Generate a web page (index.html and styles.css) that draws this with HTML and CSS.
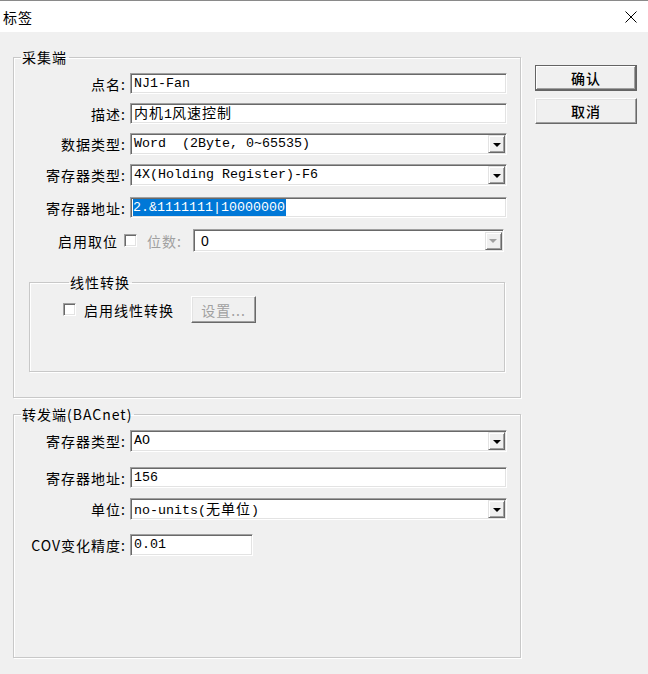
FILE: index.html
```html
<!DOCTYPE html>
<html lang="zh-CN">
<head>
<meta charset="utf-8">
<title>标签</title>
<link rel="stylesheet" href="styles.css">
</head>
<body>
<div class="titlebar">
  <span class="title">标签</span>
  <svg class="close" width="12" height="12" viewBox="0 0 12 12"><path d="M0.5 0.5 L11.5 11.5 M11.5 0.5 L0.5 11.5" stroke="#000" stroke-width="1" fill="none"/></svg>
</div>
<div class="content">
  <div class="groups">
    <fieldset class="group g1">
      <legend>采集端</legend>
      <div class="row r1"><span class="lbl">点名:</span><div class="edit w-full"><span class="mono">NJ1-Fan</span></div></div>
      <div class="row r2"><span class="lbl">描述:</span><div class="edit w-full"><span class="mono"><span class="cjk">内机</span>1<span class="cjk">风速控制</span></span></div></div>
      <div class="row r3"><span class="lbl">数据类型:</span><div class="combo w-full"><span class="mono">Word&nbsp; (2Byte, 0~65535)</span><span class="drop"><i class="tri"></i></span></div></div>
      <div class="row r4"><span class="lbl">寄存器类型:</span><div class="combo w-full"><span class="mono">4X(Holding Register)-F6</span><span class="drop"><i class="tri"></i></span></div></div>
      <div class="row r5"><span class="lbl">寄存器地址:</span><div class="edit w-full"><span class="mono sel">2.&amp;1111111|10000000</span></div></div>
      <div class="row r6">
        <span class="lbl lbl-short">启用取位</span><span class="check"></span><span class="dis-lbl">位数:</span>
        <div class="combo w-bits disabled"><span class="plain">0</span><span class="drop"><i class="tri"></i></span></div>
      </div>
      <fieldset class="group inner">
        <legend>线性转换</legend>
        <div class="lin-row"><span class="check"></span><span class="lin-lbl">启用线性转换</span><span class="btn btn-dis">设置...</span></div>
      </fieldset>
    </fieldset>
    <fieldset class="group g2">
      <legend>转发端(BACnet)</legend>
      <div class="row s1"><span class="lbl">寄存器类型:</span><div class="combo w-full"><span class="mono">AO</span><span class="drop"><i class="tri"></i></span></div></div>
      <div class="row s2"><span class="lbl">寄存器地址:</span><div class="edit w-full"><span class="mono">156</span></div></div>
      <div class="row s3"><span class="lbl">单位:</span><div class="combo w-full"><span class="mono">no-units(<span class="cjk">无单位</span>)</span><span class="drop"><i class="tri"></i></span></div></div>
      <div class="row s4"><span class="lbl">COV变化精度:</span><div class="edit w-small"><span class="mono">0.01</span></div></div>
    </fieldset>
  </div>
  <div class="buttons">
    <span class="btn btn-default">确认</span>
    <span class="btn btn-norm">取消</span>
  </div>
</div>
</body>
</html>
```
FILE: styles.css
```css
* { box-sizing: border-box; }
html, body { margin: 0; padding: 0; }
body {
  width: 648px;
  height: 674px;
  overflow: hidden;
  background: #f0f0f0;
  color: #000;
  font-family: "Noto Sans CJK SC", "Noto Sans", sans-serif;
  font-size: 14px;
}
.titlebar {
  height: 32px;
  background: #fff;
  border-top: 1px solid #8a8a8a;
  display: flex;
  align-items: center;
  justify-content: space-between;
  padding: 0 11px 0 3px;
}
.title { font-size: 14px; letter-spacing: 1px; }
.close { display: block; margin-top: 1px; }

.content {
  display: flex;
  align-items: flex-start;
  padding: 15px 0 0 13px;
}
.groups { display: flex; flex-direction: column; }

.group {
  margin: 0;
  border: 1px solid #c8c8c8;
  box-shadow: inset 1px 1px 0 #fff, 1px 1px 0 #fff;
}
.group legend {
  font-size: 14px;
  line-height: 20px;
  letter-spacing: 1px;
  padding: 0 2px 0 1px;
  margin-left: 7px;
}
.g1 { width: 508px; padding: 6px 13px 25px 0; }
.g2 { width: 508px; padding: 6px 13px 101px 0; margin-top: 6px; }
.inner { width: 476px; margin: 20px 0 0 15px; padding: 4px 0 48px 33px; }
.inner legend { margin-left: 6px; }

.row { display: flex; align-items: center; }
.r2 { margin-top: 9px; }
.r3 { margin-top: 9px; }
.r4 { margin-top: 9px; }
.r5, .r6 { margin-top: 11px; }
.s2 { margin-top: 15px; }
.s3 { margin-top: 10px; }
.s4 { margin-top: 14px; }

.lbl {
  width: 112px;
  margin-right: 4px;
  text-align: right;
  letter-spacing: 1px;
  white-space: nowrap;
}
.lbl-short { width: 104px; margin-right: 6px; }

.edit, .combo {
  height: 21px;
  background: #fff;
  border: 1px solid;
  border-color: #a0a0a0 #fff #fff #a0a0a0;
  box-shadow: inset 1px 1px 0 #696969, inset -1px -1px 0 #e3e3e3;
  display: flex;
  align-items: center;
  padding: 0 2px 0 3px;
  overflow: hidden;
}
.combo { height: 22px; justify-content: space-between; }
.w-full { width: 377px; }
.w-small { width: 123px; height: 22px; }
.w-bits { width: 311px; height: 23px; margin-left: 11px; }

.mono {
  font-family: "Liberation Mono", "Noto Sans CJK SC", monospace;
  font-size: 13.34px;
  white-space: pre;
  line-height: 16px;
}
.cjk { font-family: "Noto Sans CJK SC", sans-serif; font-size: 14px; letter-spacing: 1px; }
.plain { font-family: "Liberation Sans", sans-serif; font-size: 14px; padding-left: 4px; }
.sel {
  background: #0078d7;
  color: #fff;
  line-height: 17px;
  margin-left: -1px;
  padding: 0 1px 0 0;
}

.drop {
  width: 17px;
  height: 18px;
  margin-right: -1px;
  background: #f0f0f0;
  border: 1px solid;
  border-color: #e3e3e3 #696969 #696969 #e3e3e3;
  box-shadow: inset 1px 1px 0 #fff, inset -1px -1px 0 #a0a0a0;
  display: flex;
  align-items: center;
  justify-content: center;
}
.tri {
  display: block;
  width: 0;
  height: 0;
  border-left: 4px solid transparent;
  border-right: 4px solid transparent;
  border-top: 4px solid #000;
  margin-top: 1px;
}
.disabled .tri { border-top-color: #a0a0a0; }

.check {
  width: 13px;
  height: 13px;
  background: #fff;
  border: 1px solid;
  border-color: #a0a0a0 #fff #fff #a0a0a0;
  box-shadow: inset 1px 1px 0 #696969, inset -1px -1px 0 #e3e3e3;
  flex: none;
}
.dis-lbl { color: #a0a0a0; margin-left: 10px; letter-spacing: 1px; }

.lin-row { display: flex; align-items: center; }
.lin-lbl { margin-left: 8px; letter-spacing: 1px; }

.btn {
  display: flex;
  align-items: center;
  justify-content: center;
  background: #f0f0f0;
  border: 1px solid;
  border-color: #fff #696969 #696969 #fff;
  box-shadow: inset -1px -1px 0 #a0a0a0, inset 1px 1px 0 #e3e3e3;
  letter-spacing: 1px;
}
.btn-dis {
  width: 65px;
  height: 27px;
  margin-left: 17px;
  color: #a0a0a0;
}
.buttons {
  display: flex;
  flex-direction: column;
  gap: 7px;
  margin: 18px 0 0 14px;
}
.btn-default, .btn-norm { width: 102px; height: 26px; font-weight: 500; }
.btn-default { border-color: #fff #404040 #404040 #fff; outline: 1px solid #646464; outline-offset: -1px; box-shadow: inset -1px -1px 0 #696969, inset 1px 1px 0 #fff, inset -2px -2px 0 #a0a0a0; }
```
